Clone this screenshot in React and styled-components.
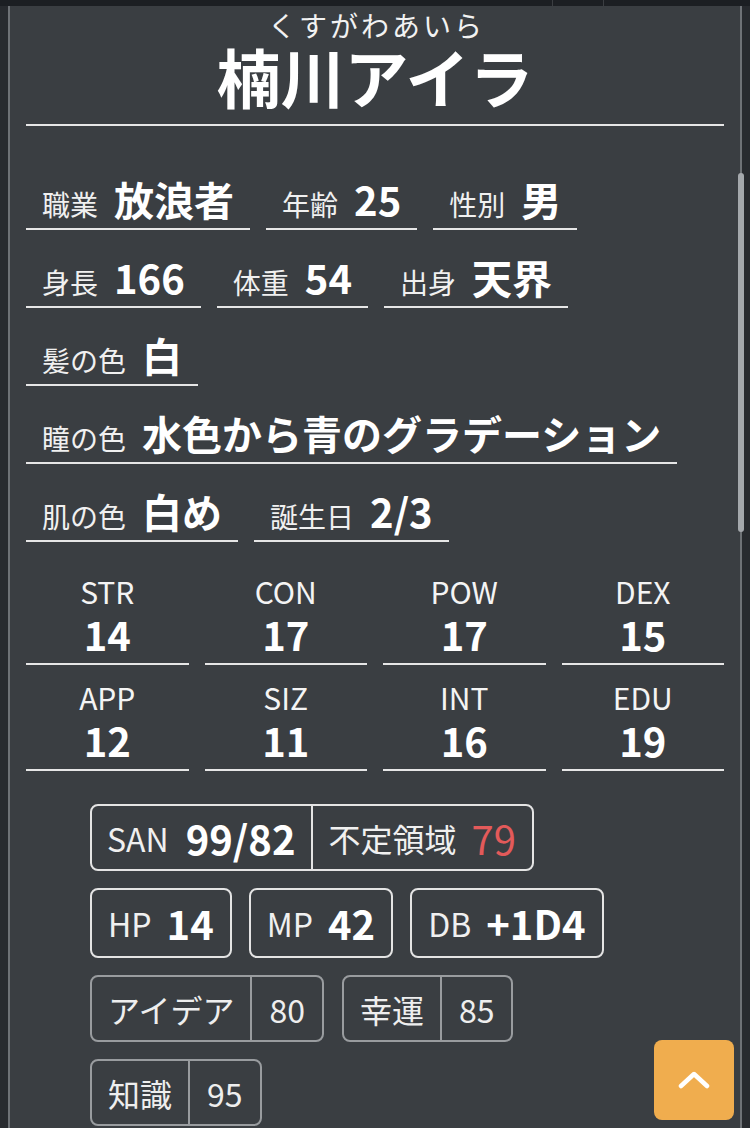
import React from 'react';
import styled, { createGlobalStyle } from 'styled-components';

const GlobalStyle = createGlobalStyle`
  html, body { margin: 0; padding: 0; background: #282b2f; }
  body {
    font-family: "Noto Sans CJK JP", "Noto Sans", sans-serif;
    color: #ffffff;
    overflow: hidden;
  }
  * { box-sizing: border-box; }
`;

const Viewport = styled.div`
  position: relative;
  width: 750px;
  height: 1128px;
  overflow: hidden;
  background: #282b2f;
`;

const TopStrip = styled.div`
  height: 6px;
  display: grid;
  grid-template-columns: 552px 51px 1fr;
  background: #1c1f23;
`;

const StripSegment = styled.div`
  border-left: ${p => (p.$first ? 'none' : '1px solid #3b3e42')};
`;

const Card = styled.div`
  margin-left: 8px;
  width: 734px;
  height: 1122px;
  background: #3a3e42;
  border-left: 2px solid #6e7276;
  border-right: 2px solid #6e7276;
  padding: 5px 16px 0;
`;

const Header = styled.header`
  text-align: center;
`;

const Furigana = styled.div`
  font-size: 28px;
  line-height: 1;
  letter-spacing: 3px;
  padding-left: 3px;
  color: #f2f2f2;
`;

const Name = styled.h1`
  margin: 4px 0 0;
  font-size: 64px;
  line-height: 1;
  font-weight: 700;
  color: #ffffff;
`;

const Rule = styled.div`
  margin-top: 17px;
  height: 2px;
  background: #e6e6e6;
`;

const Profile = styled.section`
  margin-top: 53px;
  display: flex;
  flex-direction: column;
  gap: 27px;
`;

const FieldRow = styled.div`
  display: flex;
  gap: 16px;
`;

const Field = styled.div`
  display: flex;
  align-items: baseline;
  gap: 16px;
  padding: 0 16px 9px;
  border-bottom: 2px solid #e6e6e6;
`;

const FieldLabel = styled.span`
  font-size: 28px;
  line-height: 1;
  color: #f0f0f0;
`;

const FieldValue = styled.span`
  font-size: 40px;
  line-height: 1;
  font-weight: 700;
  color: #ffffff;
`;

const StatGrid = styled.section`
  margin-top: 34px;
  display: grid;
  grid-template-columns: repeat(4, 1fr);
  column-gap: 16px;
  row-gap: 17px;
`;

const StatCell = styled.div`
  display: flex;
  flex-direction: column;
  align-items: center;
  gap: 8px;
  padding-bottom: 9px;
  border-bottom: 2px solid #e6e6e6;
`;

const StatLabel = styled.span`
  font-size: 30px;
  line-height: 1;
  color: #f4f4f4;
`;

const StatValue = styled.span`
  font-size: 40px;
  line-height: 1;
  font-weight: 700;
`;

const Boxes = styled.section`
  margin-top: 33px;
  padding-left: 64px;
  display: flex;
  flex-direction: column;
  gap: 17px;
`;

const BoxRow = styled.div`
  display: flex;
  gap: ${p => (p.$gap != null ? p.$gap : 17)}px;
`;

const Box = styled.div`
  display: flex;
  height: ${p => p.$h}px;
  border: 2px solid ${p => (p.$muted ? '#999c9f' : '#e4e4e4')};
  border-radius: 8px;
`;

const Cell = styled.div`
  display: flex;
  align-items: center;
  gap: ${p => (p.$gap != null ? p.$gap : 16)}px;
  padding: 0 ${p => (p.$pad != null ? p.$pad : 16)}px;
  border-left: ${p => (p.$divider ? `2px solid ${p.$muted ? '#999c9f' : '#e4e4e4'}` : 'none')};
`;

const BoxLabel = styled.span`
  font-size: 32px;
  line-height: 1;
  color: #f0f0f0;
`;

const BoxValue = styled.span`
  font-size: 40px;
  line-height: 1;
  font-weight: ${p => (p.$regular ? 400 : 700)};
  color: ${p => p.$color || '#ffffff'};
`;

const SkillText = styled.span`
  font-size: 32px;
  line-height: 1;
  color: #eeeeee;
`;

const ScrollThumb = styled.div`
  position: absolute;
  left: 738px;
  top: 173px;
  width: 6px;
  height: 359px;
  border-radius: 3px;
  background: #a4a8ac;
`;

const ToTop = styled.button`
  position: absolute;
  right: 16px;
  bottom: 8px;
  width: 80px;
  height: 80px;
  border: none;
  border-radius: 8px;
  background: #f0ad4e;
  display: flex;
  align-items: center;
  justify-content: center;
  padding: 0;
  cursor: pointer;
`;

const profileRows = [
  [['職業', '放浪者'], ['年齢', '25'], ['性別', '男']],
  [['身長', '166'], ['体重', '54'], ['出身', '天界']],
  [['髪の色', '白']],
  [['瞳の色', '水色から青のグラデーション']],
  [['肌の色', '白め'], ['誕生日', '2/3']],
];

const stats = [
  ['STR', 14], ['CON', 17], ['POW', 17], ['DEX', 15],
  ['APP', 12], ['SIZ', 11], ['INT', 16], ['EDU', 19],
];

const Skill = ({ label, value }) => (
  <Box $h={67} $muted>
    <Cell>
      <SkillText>{label}</SkillText>
    </Cell>
    <Cell $divider $muted $pad={17}>
      <SkillText>{value}</SkillText>
    </Cell>
  </Box>
);

const Pair = ({ label, value }) => (
  <Box $h={70}>
    <Cell $gap={15}>
      <BoxLabel>{label}</BoxLabel>
      <BoxValue>{value}</BoxValue>
    </Cell>
  </Box>
);

export default function App() {
  return (
    <>
      <GlobalStyle />
      <Viewport>
        <TopStrip>
          <StripSegment $first />
          <StripSegment />
          <StripSegment />
        </TopStrip>
        <Card>
          <Header>
            <Furigana>くすがわあいら</Furigana>
            <Name>楠川アイラ</Name>
          </Header>
          <Rule />
          <Profile>
            {profileRows.map((row, i) => (
              <FieldRow key={i}>
                {row.map(([label, value]) => (
                  <Field key={label}>
                    <FieldLabel>{label}</FieldLabel>
                    <FieldValue>{value}</FieldValue>
                  </Field>
                ))}
              </FieldRow>
            ))}
          </Profile>
          <StatGrid>
            {stats.map(([label, value]) => (
              <StatCell key={label}>
                <StatLabel>{label}</StatLabel>
                <StatValue>{value}</StatValue>
              </StatCell>
            ))}
          </StatGrid>
          <Boxes>
            <BoxRow>
              <Box $h={67}>
                <Cell $gap={17} $pad={15}>
                  <BoxLabel>SAN</BoxLabel>
                  <BoxValue>99/82</BoxValue>
                </Cell>
                <Cell $divider $gap={15}>
                  <BoxLabel>不定領域</BoxLabel>
                  <BoxValue $regular $color="#e35a5a">79</BoxValue>
                </Cell>
              </Box>
            </BoxRow>
            <BoxRow>
              <Pair label="HP" value="14" />
              <Pair label="MP" value="42" />
              <Pair label="DB" value="+1D4" />
            </BoxRow>
            <BoxRow $gap={18}>
              <Skill label="アイデア" value="80" />
              <Skill label="幸運" value="85" />
            </BoxRow>
            <BoxRow>
              <Skill label="知識" value="95" />
            </BoxRow>
          </Boxes>
        </Card>
        <ScrollThumb />
        <ToTop aria-label="ページトップへ">
          <svg width="32" height="20" viewBox="0 0 32 20" fill="none">
            <path d="M3 16 L16 4 L29 16" stroke="#ffffff" strokeWidth="4.5" strokeLinecap="round" strokeLinejoin="round" />
          </svg>
        </ToTop>
      </Viewport>
    </>
  );
}
